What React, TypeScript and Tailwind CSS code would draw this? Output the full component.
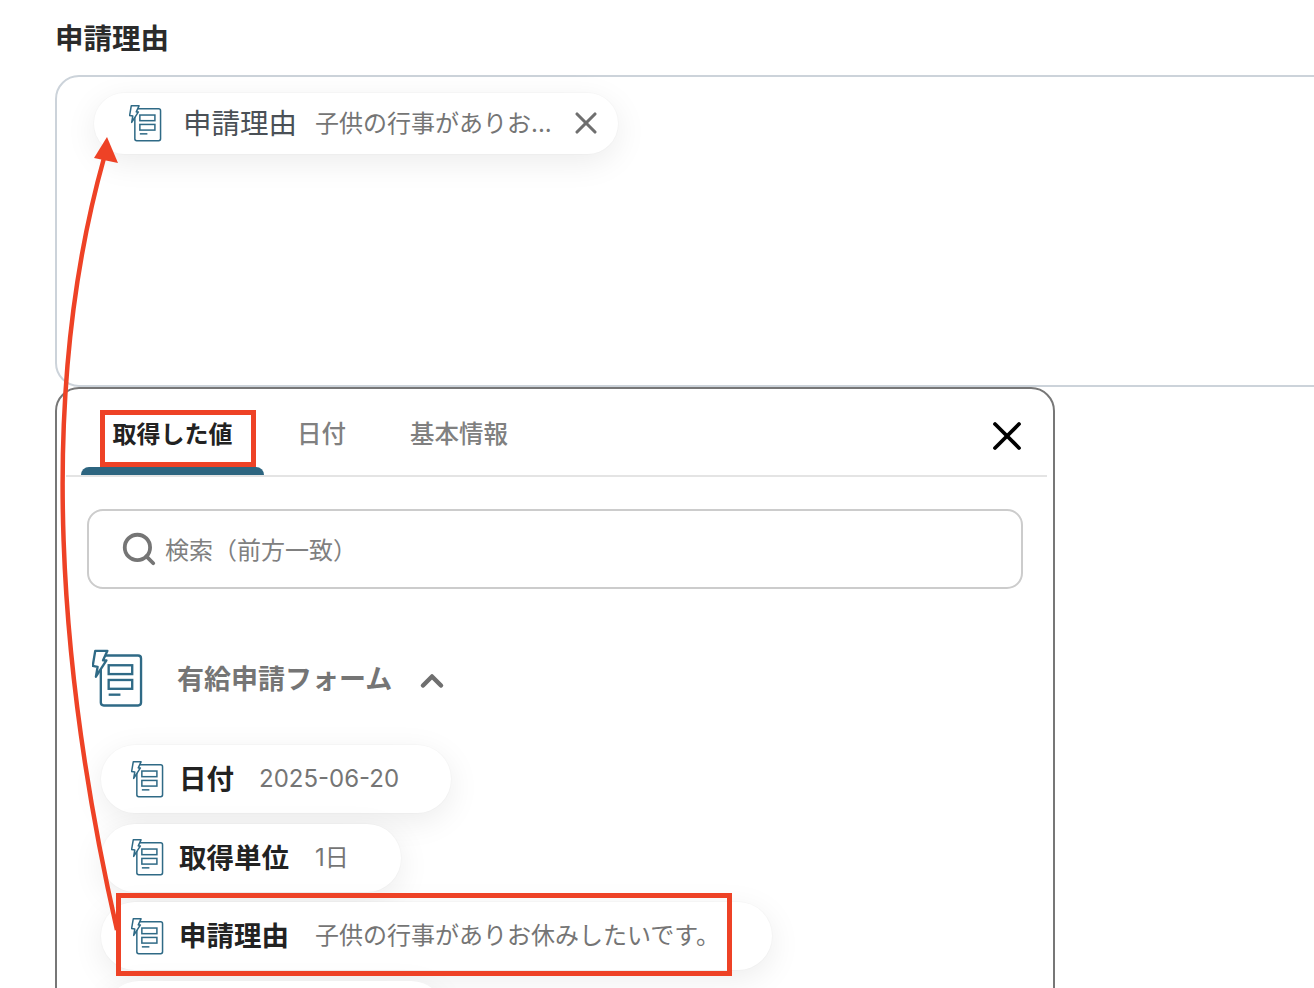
import React from 'react';
import { ChevronUp, Search, X } from 'lucide-react';

const FormIcon: React.FC<{ className?: string; strokeWidth?: number }> = ({ className, strokeWidth = 2.4 }) => (
  <svg viewBox="-1 -1 52 59" fill="none" stroke="#2f6a86" strokeWidth={strokeWidth} className={className}>
    <rect x="8" y="5" width="41" height="51" rx="3" />
    <rect x="16" y="15" width="24" height="9" />
    <rect x="16" y="30" width="24" height="9" />
    <path d="M16 45h12" />
    <path d="M2.3 .3H14.7L10.3 10H13.7L3 26.7L4.7 16.7L-.3 15.7Z" fill="#fff" strokeLinejoin="round" />
  </svg>
);

const items = [
  { label: '日付', value: '2025-06-20', width: 'w-[350px]', gap: 'ml-[25px]' },
  { label: '取得単位', value: '1日', width: 'w-[300px]', gap: 'ml-[26px]' },
  { label: '申請理由', value: '子供の行事がありお休みしたいです。', width: 'w-[671px]', gap: 'ml-[26px]' },
];

export default function App() {
  return (
    <div
      className="relative h-[988px] w-[1314px] overflow-hidden bg-white pl-[55px] pt-[20px]"
      style={{ fontFamily: 'Inter, "Noto Sans CJK JP", "Noto Sans", sans-serif' }}
    >
      <h2 className="h-[38px] text-[28.5px] leading-[38px] font-bold text-[#2b2b2b]">申請理由</h2>

      <div className="mt-[17px] h-[312px] w-[1400px] rounded-[24px] border-2 border-[#ccd3da] pl-[37px] pt-[16px]">
        <div className="flex h-[61px] w-[524px] items-center rounded-full bg-white pl-[35px] shadow-[0_0_0_1px_rgba(0,0,0,0.015),0_8px_32px_rgba(0,0,0,0.08)]">
          <FormIcon className="h-[37px] w-[33px] shrink-0" strokeWidth={2.4} />
          <span className="mt-[2px] ml-[21px] text-[28.5px] leading-none text-[#4a5056]">申請理由</span>
          <span className="ml-[18px] w-[240px] whitespace-nowrap text-[24px] leading-none text-[#757575]">子供の行事がありお...</span>
          <X className="mb-[1px] ml-[13px] h-[36px] w-[36px] text-[#6f6f6f]" strokeWidth={2.1} />
        </div>
      </div>

      <div className="h-[640px] w-[1000px] rounded-[24px] border-2 border-[#777777] bg-white">
        <div className="ml-[9px] mr-[6px] flex h-[88px] items-stretch border-b-2 border-[#e4e4e4] pl-[15px]">
          <div className="flex w-[183px] flex-col items-center justify-between">
            <span className="mt-[28px] text-[24px] leading-[36px] font-bold text-[#222222]">取得した値</span>
            <span className="h-[8px] w-full rounded-t-[8px] bg-[#2d6580]" />
          </div>
          <span className="ml-[33px] mt-[27px] text-[24.5px] leading-[36px] font-medium text-[#808080]">日付</span>
          <span className="ml-[64px] mt-[27px] text-[24.5px] leading-[36px] font-medium text-[#808080]">基本情報</span>
          <X className="ml-auto mr-[16px] mt-[23px] h-[48px] w-[48px] text-black" strokeWidth={1.9} />
        </div>

        <div className="ml-[30px] mt-[32px] flex h-[80px] w-[936px] items-center rounded-[16px] border-2 border-[#cccccc] pl-[31px]">
          <Search className="h-[38px] w-[38px] text-[#757575]" strokeWidth={2.4} />
          <span className="ml-[7px] mt-[4px] text-[24px] leading-none text-[#808080]">検索（前方一致）</span>
        </div>

        <div className="ml-[35px] mt-[60px] flex items-center">
          <FormIcon className="h-[59px] w-[51px] shrink-0" />
          <span className="mt-[2px] ml-[34px] text-[27px] leading-none font-bold text-[#757575]">有給申請フォーム</span>
          <ChevronUp className="ml-[22px] mt-[4px] h-[36px] w-[36px] text-[#6f6f6f]" strokeWidth={3} />
        </div>

        <div className="ml-[44px] mt-[37px] flex flex-col gap-[10.5px]">
          {items.map((item) => (
            <div
              key={item.label}
              className={`flex h-[68px] items-center rounded-full bg-white pl-[30px] shadow-[0_0_0_1px_rgba(0,0,0,0.015),0_8px_32px_rgba(0,0,0,0.08)] ${item.width}`}
            >
              <FormIcon className="h-[37px] w-[33px] shrink-0" strokeWidth={2.4} />
              <span className="mt-[2px] ml-[15px] text-[27.5px] leading-none font-bold text-[#222222]">{item.label}</span>
              <span className={`${item.gap} text-[24px] leading-none text-[#757575]`}>{item.value}</span>
            </div>
          ))}
          <div className="ml-[4px] h-[68px] w-[340px] rounded-full bg-white shadow-[0_8px_32px_rgba(0,0,0,0.08)]" />
        </div>
      </div>

      {/* callouts drawn over the screenshot */}
      <div className="absolute left-[100px] top-[410px] h-[57px] w-[156px] border-[5px] border-[#ee4226]" />
      <div className="absolute left-[116px] top-[893px] h-[83px] w-[616px] border-[5px] border-[#ee4226]" />
      <svg className="absolute left-0 top-0 h-[988px] w-[1314px]" fill="none">
        <path d="M117 930C60 680 36 400 104 158" stroke="#ee4226" strokeWidth="4.5" />
        <path d="M107 137L94 158L118 163Z" fill="#ee4226" />
      </svg>
    </div>
  );
}
